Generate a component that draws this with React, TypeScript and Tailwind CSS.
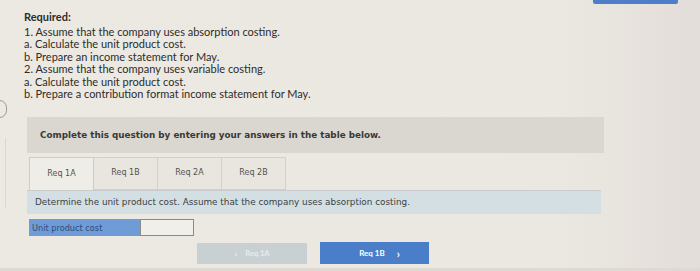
import React from "react";

export default function App() {
  const lines = [
    "1. Assume that the company uses absorption costing.",
    "a. Calculate the unit product cost.",
    "b. Prepare an income statement for May.",
    "2. Assume that the company uses variable costing.",
    "a. Calculate the unit product cost.",
    "b. Prepare a contribution format income statement for May.",
  ];
  return (
    <div className="relative w-[700px] h-[271px] overflow-hidden bg-[linear-gradient(90deg,#ece9e2_0%,#ebe8e1_80%,#e3ddd9_100%)]">
      <div className="absolute left-[593px] top-0 h-[4px] w-[85px] rounded-b-[2px] bg-[#4e7ec9]" />
      <div className="absolute left-[-8px] top-[100px] h-[18px] w-[15px] rounded-full border border-[#9a9893]" />
      <div className="absolute left-[5px] top-[138px] h-[70px] w-px bg-[#dcd8d1]" />
      <div className="flex flex-col pl-[24px] pt-[11px]">
        <div className="flex flex-col font-['Lato',sans-serif] text-[11px] leading-[12.4px] text-[#2d2c2a]">
          <div className="mb-[2.6px] font-bold">Required:</div>
          {lines.map((l) => (
            <div key={l}>{l}</div>
          ))}
        </div>
        <div className="ml-[3px] mt-[17px] flex w-[577px] flex-col font-['DejaVu_Sans',sans-serif]">
          <div className="flex h-[36px] items-center bg-[#d9d7d0] pl-[13px] text-[8.8px] font-bold text-[#3a3936]">
            Complete this question by entering your answers in the table below.
          </div>
          <div className="ml-[2px] mt-[4px] flex h-[33px] items-stretch text-[8px] text-[#55534f]">
            {["Req 1A", "Req 1B", "Req 2A", "Req 2B"].map((t, i) => (
              <div
                key={t}
                className={
                  i === 0
                    ? "flex w-[65px] items-center justify-center border border-b-0 border-[#cfccc5] bg-[#efede7] pb-[1px]"
                    : "flex w-[64px] items-center justify-center border border-l-0 border-[#d3d0c9] bg-[#e9e6df] pb-[1px]"
                }
              >
                {t}
              </div>
            ))}
          </div>
          <div className="flex h-[24px] w-[574px] items-center border-t border-[#c9cccc] bg-[#d3dfe2] pl-[8px] text-[8.85px] text-[#3b4144]">
            Determine the unit product cost. Assume that the company uses absorption costing.
          </div>
          <div className="ml-[2px] mt-[5px] flex h-[17px]">
            <div className="flex w-[111px] items-center bg-[#6f9cd7] pl-[3px] text-[8.2px] text-[#2f4a78]">
              Unit product cost
            </div>
            <div className="w-[54px] border border-[#8a8a88] bg-[#f0efea]" />
          </div>
          <div className="ml-[170px] mt-[6px] flex items-center gap-[13px] font-['Lato',sans-serif]">
            <div className="flex h-[21px] w-[110px] items-center justify-center gap-[8px] bg-[#c9d0d3] text-[7.5px] font-bold text-[#e8ecee]">
              <span className="text-[10px] leading-none">&lsaquo;</span>
              <span>Req 1A</span>
            </div>
            <div className="flex h-[22px] w-[109px] items-center justify-center gap-[12px] bg-[#4a7ec9] pl-[10px] text-[8px] font-bold text-white">
              <span>Req 1B</span>
              <span className="text-[11px] leading-none">&rsaquo;</span>
            </div>
          </div>
        </div>
      </div>
      <div className="absolute bottom-0 left-0 h-[3px] w-full bg-[#dedad3]" />
    </div>
  );
}
